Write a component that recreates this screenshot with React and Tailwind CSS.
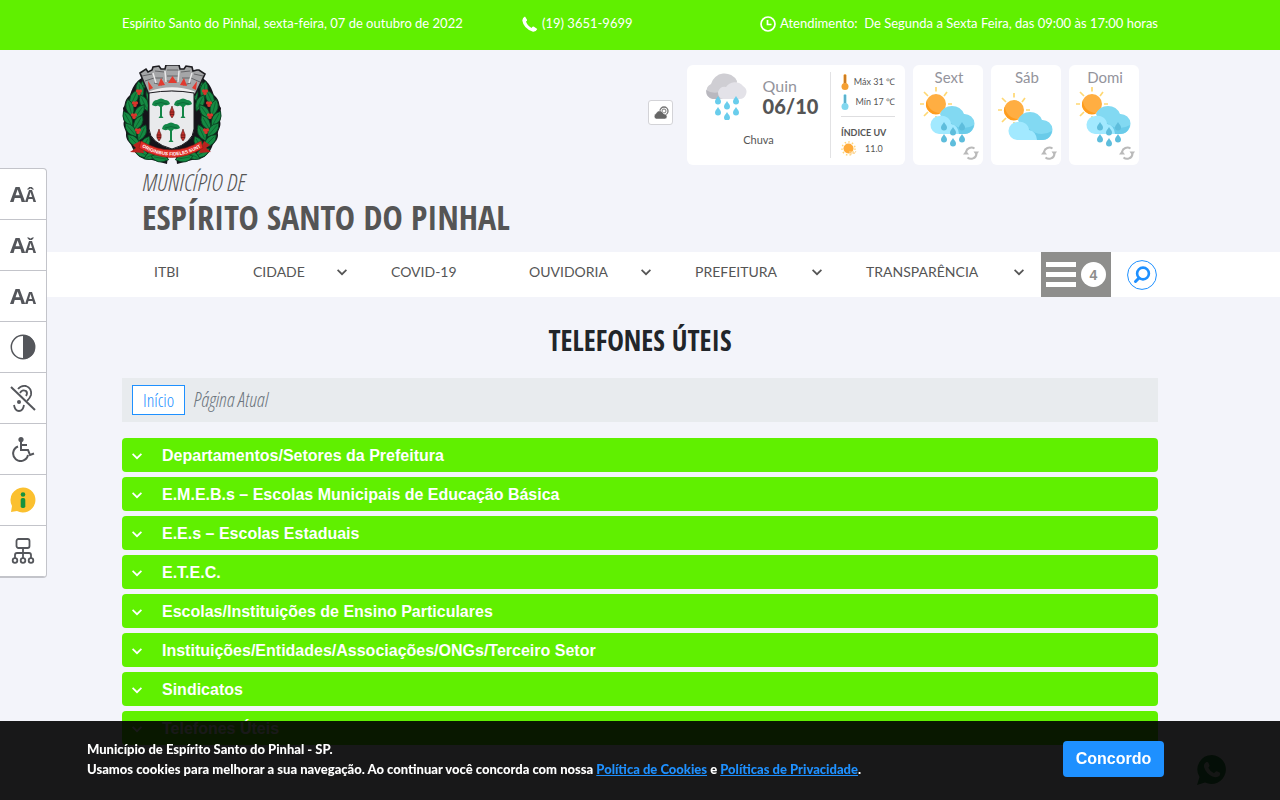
import React from "react";

const menu = [
  { label: "ITBI" },
  { label: "CIDADE", sub: true },
  { label: "COVID-19" },
  { label: "OUVIDORIA", sub: true },
  { label: "PREFEITURA", sub: true },
  { label: "TRANSPARÊNCIA", sub: true },
];

const sections = [
  "Departamentos/Setores da Prefeitura",
  "E.M.E.B.s – Escolas Municipais de Educação Básica",
  "E.E.s – Escolas Estaduais",
  "E.T.E.C.",
  "Escolas/Instituições de Ensino Particulares",
  "Instituições/Entidades/Associações/ONGs/Terceiro Setor",
  "Sindicatos",
  "Telefones Úteis",
];

const leaves = [
  [24, 17, 35], [18, 25, -10], [28, 27, 15], [12, 33, 25], [22, 38, -25], [8, 43, -15],
  [17, 47, 35], [6, 54, -30], [16, 58, 30], [9, 65, -40], [20, 68, 25], [12, 76, -45],
  [23, 79, 30], [20, 88, -60], [30, 90, 65], [38, 93, -80],
];
const berries = [[17, 27], [13, 39], [12, 51], [16, 66]];

function Branch() {
  return (
    <g>
      <path d="M26 10 C12 15 10 25 8 30 C1 36 4 40 1 43 C2 50 0 52 2 56 C0 62 5 65 4 70 C4 76 9 78 10 82 C14 91 20 95 30 95 L45 99 L50 60 L30 15Z" fill="#15141a" />
      {leaves.map(([x, y, r]) => (
        <g key={x + "-" + y} transform={`translate(${x} ${y}) rotate(${r})`}>
          <path d="M0 -9 Q8 -1 0 9 Q-8 -1 0 -9Z" fill="#158a43" stroke="#0b3b20" strokeWidth="0.8" />
          <path d="M0 -6V6" stroke="#0c5c2b" strokeWidth="0.7" />
        </g>
      ))}
      {berries.map(([x, y]) => (
        <g key={y} fill="#d9362c">
          <circle cx={x - 1.4} cy={y - 1} r="1.700" />
          <circle cx={x + 1.4} cy={y - 1} r="1.700" />
          <circle cx={x} cy={y + 1.4} r="1.700" />
        </g>
      ))}
    </g>
  );
}

function Tree({ x, y }) {
  return (
    <g transform={`translate(${x} ${y})`}>
      <path d="M-9 2 Q-8 -3 -4 -3 Q0 -6 4 -3 Q8 -3 9 1 Q6 3 3 2 L1 4 V13 L2.500 15 H-2.500 L-1 13 V4 L-3 2.500 Q-6 4 -9 2Z" fill="#138647" />
      <path d="M-6 1 Q0 -2 6 1" stroke="#0a5d30" fill="none" strokeWidth="0.7" />
    </g>
  );
}

function Cone({ x, y }) {
  return (
    <g transform={`translate(${x} ${y})`}>
      <path d="M0 -6 L1 -3 Q2.600 -1 2 3 L0 6 L-2 3 Q-2.600 -1 -1 -3Z" fill="#c5302c" stroke="#541412" strokeWidth="0.6" />
      <path d="M-2 0H2M-2 2.400H2" stroke="#541412" strokeWidth="0.7" />
    </g>
  );
}

function Crest() {
  return (
    <svg viewBox="0 0 100 100" className="size-[100px]" role="img" aria-label="Brasão">
      <Branch />
      <g transform="translate(100 0) scale(-1 1)"><Branch /></g>
      <path d="M26 28 L72 28 L74 70 L50 92 L26 70Z" fill="#17161b" />
      <path d="M18 8 L24 4 L26 7 L30 5 L31 2 L37 1 L39 4 L43 4 L44 0 L57 0 L58 4 L62 4 L64 1 L70 2 L71 6 L75 5 L77 5 L83 9 L73 30 Q50 22 27 30Z" fill="#a5a6a8" stroke="#1d1c20" strokeWidth="1.600" />
      <path d="M20 11L30 9M33 6L42 7M45 5H56M59 7L68 6M72 9L81 11M23 16L32 13L41 13M45 11H56M60 13L69 13L78 17M32 18L40 20M44 16H57M61 20L69 18" stroke="#5d5e61" strokeWidth="0.9" fill="none" />
      <path d="M31 8L34 18M43 6L44 17M57 6L56 17M70 8L67 18" stroke="#e7e7e8" strokeWidth="1.500" />
      <path d="M36 21 L39 13 L43 20Z M46 18 L50.500 11 L55 18Z M58 20 L62 13 L65 21Z M26 16 L31 23 L27 25Z M75 16 L70 23 L74 25Z" fill="#e23a2f" />
      <path d="M28 28 Q50 20 72 28" fill="none" stroke="#eeeeef" strokeWidth="3.500" />
      <path d="M27 28 Q50 24 72 28 V64 Q71 78 50 84 Q28 78 27 64Z" fill="#e9eaec" stroke="#1b1a1f" strokeWidth="1" />
      <Tree x={39} y={38} />
      <Tree x={61} y={38} />
      <Tree x={49} y={62} />
      <Cone x={50} y={47} />
      <Cone x={37} y={70} />
      <Cone x={61} y={70} />
      <path d="M18 76 L11 80 L14 83 L8 87 L22 88Z M82 76 L88 80 L84 83 L89 87 L77 88Z" fill="#b8231e" />
      <path d="M19 76 Q50 94 79 76 L81 83 Q50 102 17 83Z" fill="#e23028" stroke="#8b1613" strokeWidth="0.6" />
      <path id="motto" d="M20 82 Q50 99 79 82" fill="none" />
      <text fontSize="4.600" fontWeight="700" fill="#fff" fontFamily="Liberation Sans, sans-serif">
        <textPath href="#motto" startOffset="50%" textAnchor="middle">ORIGINIBUS FIDELES SUNT</textPath>
      </text>
    </svg>
  );
}

function Chevron({ className }) {
  return (
    <svg viewBox="0 0 10 10" className={className} fill="none" stroke="currentColor" strokeWidth="1.700" aria-hidden="true">
      <path d="M0.600 2.800 L5 7.200 L9.400 2.800" />
    </svg>
  );
}

const drop = "M0 -4 C1 -2 3 -0.500 3 1.500 A3 3 0 0 1 -3 1.500 C-3 -0.500 -1 -2 0 -4Z";

function RainCloud() {
  return (
    <svg viewBox="0 0 42 48" className="h-12 w-[42px]" aria-hidden="true">
      <path d="M8 27 A8 8 0 0 1 6 12 A14 14 0 0 1 32 9 L30 27Z" fill="#cfced3" />
      <path d="M1 18 Q10 24 20 17 L14 27 H8 Q1 26 1 18Z" fill="#b9b8bf" />
      <path d="M18 27 A6 7 0 0 1 13 20 Q15 14 21 15 A10 9 0 0 1 38 14 A7 7 0 0 1 34 27Z" fill="#e3e2e8" />
      {[[13, 28], [31, 28], [22, 33], [13, 39], [31, 39], [22, 44]].map(([x, y]) => (
        <path key={x + "-" + y} d={drop} transform={`translate(${x} ${y})`} fill="#69cdec" />
      ))}
    </svg>
  );
}

function SunCloud({ rain }) {
  return (
    <svg viewBox="0 0 56 60" className="h-[60px] w-14" aria-hidden="true">
      <g transform={rain ? "translate(0 0)" : "translate(0 6)"}>
        <path d="M17 0V4.500M28 5L25 9M5 5L9 9M1 17H5M29 17H33M5 29L9 25M17 29V31" stroke="#ffd873" strokeWidth="1.700" />
        <circle cx="17" cy="17" r="10" fill="#ffae42" />
        <path d="M8 13A10 10 0 0 0 22 26A13 13 0 0 1 8 13Z" fill="#ff9c1c" />
        <path d="M21 27 A13 13 0 0 1 45 27 A10 10 0 0 1 46 47 H29Z" fill="#82d9f2" />
        <path d="M28 46 Q36 44 32 36 Q43 45 55 38 Q53 47 45 47H29Z" fill="#6acbe9" />
        <path d="M20 47 A9 9 0 1 1 21 29 A9 9 0 0 1 32 37 Q39 38 40 47Z" fill="#a2e9ff" />
      </g>
      {rain && [[25, 40], [34, 45], [43, 40], [25, 52], [34, 56], [43, 52]].map(([x, y], i) => (
        <path key={i} d={drop} transform={`translate(${x} ${y - 1})`} fill="#5ebddc" />
      ))}
    </svg>
  );
}

function Refresh() {
  return (
    <svg viewBox="0 0 16 16" className="size-4" fill="none" stroke="#bababa" strokeWidth="2" aria-hidden="true">
      <path d="M3 7 A5.500 5.500 0 0 1 11.500 3.500M13.500 9A5.500 5.500 0 0 1 4.500 12.500" />
      <path d="M0 9.500 H6 L3 5.500Z M10.500 6.500H16L13.300 10.500Z" fill="#bababa" stroke="none" />
    </svg>
  );
}

function Thermo({ color, tip }) {
  return (
    <svg viewBox="0 0 8 16" className="h-4 w-2" aria-hidden="true">
      <rect x="2.500" y="0" width="3" height="12" rx="1.500" fill={color} />
      <path d="M4 1V9" stroke={tip} strokeWidth="1.300" />
      <circle cx="4" cy="12.500" r="3.500" fill={color} />
    </svg>
  );
}

function ContrastIcon() {
  return (
    <svg viewBox="0 0 26 26" className="size-[26px]" aria-hidden="true">
      <circle cx="13" cy="13" r="11.700" fill="none" stroke="#54565b" strokeWidth="1.500" />
      <path d="M13 1A12 12 0 0 1 13 25Z" fill="#54565b" />
    </svg>
  );
}

function EarIcon() {
  return (
    <svg viewBox="0 0 26 28" className="h-7 w-[26px]" fill="none" stroke="#54565b" strokeWidth="1.800" aria-hidden="true">
      <path d="M8 5 Q11 1 16 2 Q22 4 21 11 Q20 14 17 17M10 9 Q12 5 16 7 Q18 9 16 12M4 21 Q5 27 9 27 Q13 27 14 21" />
      <circle cx="9" cy="18" r="2" fill="#54565b" stroke="none" />
      <path d="M1 3 L25 26" strokeWidth="2" />
    </svg>
  );
}

function WheelchairIcon() {
  return (
    <svg viewBox="0 0 26 26" className="size-[26px]" fill="none" stroke="#54565b" strokeWidth="2" aria-hidden="true">
      <circle cx="11" cy="3.500" r="2.600" fill="#54565b" stroke="none" />
      <path d="M11 5V14H18L20 19L24 17.500M11 9H17M8 10.500A7.500 7.500 0 1 0 18 19" />
    </svg>
  );
}

function InfoIcon() {
  return (
    <svg viewBox="0 0 26 26" className="size-[26px]" aria-hidden="true">
      <path d="M13 0.500A12.500 12.500 0 1 1 7 24 L1 25 L2 19A12.500 12.500 0 0 1 13 0.500Z" fill="#fbc02f" />
      <circle cx="13" cy="7.500" r="2.300" fill="#15923f" />
      <rect x="10.700" y="11" width="4.600" height="10" rx="1.800" fill="#15923f" />
    </svg>
  );
}

function SitemapIcon() {
  return (
    <svg viewBox="0 0 26 26" className="size-[26px]" fill="none" stroke="#54565b" strokeWidth="1.800" aria-hidden="true">
      <rect x="6.500" y="1" width="13" height="9" rx="2" />
      <path d="M13 10V20M5 20V17Q5 15 7 15H19Q21 15 21 17V20" />
      <circle cx="5" cy="22.500" r="2.300" />
      <circle cx="13" cy="22.500" r="2.300" />
      <circle cx="21" cy="22.500" r="2.300" />
    </svg>
  );
}

function SizeLabel({ small }) {
  return (
    <span className="flex items-baseline font-['Open_Sans',sans-serif] font-bold text-[#54565b]">
      <span className="text-[22px] leading-6">A</span>
      <span className="text-base leading-6">{small}</span>
    </span>
  );
}

const tools = [
  ["Aumentar fonte", <SizeLabel small="Â" />],
  ["Diminuir fonte", <SizeLabel small="Ǎ" />],
  ["Fonte padrão", <SizeLabel small="A" />],
  ["Contraste", <ContrastIcon />],
  ["Libras", <EarIcon />],
  ["Acessibilidade", <WheelchairIcon />],
  ["Informações", <InfoIcon />],
  ["Mapa do site", <SitemapIcon />],
];

function Toolbar() {
  return (
    <aside className="fixed left-0 top-[168px] z-20 flex w-[47px] flex-col overflow-hidden rounded-r border-y border-r border-[#c3c4ca] bg-white">
      {tools.map(([name, icon]) => (
        <button key={name} type="button" aria-label={name} className="flex h-[51px] items-center justify-center border-b border-[#c3c4ca]">
          {icon}
        </button>
      ))}
    </aside>
  );
}

function Weather() {
  return (
    <div className="mr-[19px] flex items-start gap-3.5 font-['Lato',sans-serif] text-[#555]">
      <button type="button" aria-label="Previsão do tempo" className="mt-[35px] flex size-[25px] items-center justify-center rounded-[3px] border border-[#d3d3d7] bg-white">
        <svg viewBox="0 0 16 14" className="h-3.5 w-4" aria-hidden="true">
          <circle cx="11" cy="5" r="4" fill="none" stroke="#777" strokeWidth="1.300" />
          <circle cx="11" cy="5" r="2" fill="none" stroke="#777" />
          <path d="M3 13A3 3 0 0 1 3 7.500A4 4 0 0 1 9 5.500Q10 7 11 8A2.500 2.500 0 0 1 12 13Z" fill="#666" stroke="#fff" strokeWidth="0.500" />
        </svg>
      </button>
      <div className="flex gap-2">
        <section className="flex h-[100px] w-[218px] rounded-md bg-white py-[7px]">
          <div className="flex w-36 flex-col items-center border-r border-[#e2e2e4]">
            <div className="flex gap-4 pl-1.5">
              <RainCloud />
              <div className="pt-1">
                <p className="text-base leading-5 text-[#94949c]">Quin</p>
                <p className="text-xl font-black leading-5">06/10</p>
              </div>
            </div>
            <p className="mt-3 text-[11px] leading-4">Chuva</p>
          </div>
          <div className="flex flex-1 flex-col px-2.5 text-[9px]">
            <div className="flex h-5 items-center justify-between whitespace-nowrap"><Thermo color="#f5a033" tip="#b5691a" /><span>Máx 31 ℃</span></div>
            <div className="flex h-5 items-center justify-between whitespace-nowrap"><Thermo color="#82d7ef" tip="#4a9cb8" /><span>Mín 17 ℃</span></div>
            <hr className="mt-1 border-[#dedee0]" />
            <p className="mt-2 whitespace-nowrap font-bold leading-4">ÍNDICE UV</p>
            <div className="flex items-center gap-2">
              <svg viewBox="0 0 16 16" className="size-4" aria-hidden="true">
                <circle cx="7.500" cy="7.500" r="6.500" fill="none" stroke="#ffd478" strokeDasharray="1.500 2.200" strokeWidth="1.500" />
                <circle cx="7.500" cy="7.500" r="5" fill="#ffac3c" />
                <path d="M9 10V13H11V10M12 10L13 13L15 10" fill="none" stroke="#fcd89b" />
              </svg>
              <span>11.0</span>
            </div>
          </div>
        </section>
        {[["Sext", true], ["Sáb", false], ["Domi", true]].map(([day, rain]) => (
          <section key={day} className="flex h-[100px] w-[70px] flex-col rounded-md bg-white pl-1.5 pr-1 pt-0.5">
            <h3 className="text-center text-[15px] leading-5 text-[#94949c]">{day}</h3>
            <SunCloud rain={rain} />
            <span className="-mt-0.5 self-end"><Refresh /></span>
          </section>
        ))}
      </div>
    </div>
  );
}

export default function App() {
  return (
    <div className="min-h-screen bg-[#f3f4fa] font-['Liberation_Sans',sans-serif]">
      <div className="h-[50px] bg-[#60f000] font-['Lato',sans-serif] text-[13px] text-white">
        <div className="mx-auto flex h-12 max-w-[1036px] items-center justify-between">
          <span className="w-[400px]">Espírito Santo do Pinhal, sexta-feira, 07 de outubro de 2022</span>
          <span className="flex flex-1 items-center gap-1">
            <svg viewBox="0 0 16 16" className="size-4" fill="currentColor" aria-hidden="true">
              <path d="M3 0.500 L5 3.800 Q5.500 4.800 4 5.600 Q5 9.500 9.500 12 Q11 10 12 10.800 L15.300 13 Q14 16 11 15.800 Q1.500 12.500 0.300 4.500 Q0.500 1.500 3 0.500Z" />
            </svg>
            (19) 3651-9699
          </span>
          <span className="flex items-center gap-1 whitespace-pre">
            <svg viewBox="0 0 16 16" className="size-4" fill="none" stroke="currentColor" strokeWidth="1.700" aria-hidden="true">
              <circle cx="8" cy="8" r="7" />
              <path d="M7.500 4V8.500H11.500" />
            </svg>
            {"Atendimento:  De Segunda a Sexta Feira, das 09:00 às 17:00 horas"}
          </span>
        </div>
      </div>

      <header className="mx-auto flex h-[202px] max-w-[1036px] items-start justify-between pt-[15px]">
        <a href="#" className="block text-[#555]">
          <Crest />
          <span className="ml-5 block font-['Open_Sans_Condensed_Light','Open_Sans_Condensed',sans-serif] text-2xl font-light italic leading-[34px]">MUNICÍPIO DE</span>
          <span className="ml-5 block font-['Open_Sans_Condensed',sans-serif] text-[34px] font-bold leading-9">ESPÍRITO SANTO DO PINHAL</span>
        </a>
        <Weather />
      </header>

      <div className="bg-white">
        <div className="mx-auto flex h-[45px] max-w-[1036px] items-stretch">
          <nav className="grid flex-1 grid-cols-[99fr_138fr_138fr_166fr_171fr_202fr] font-['Lato',sans-serif] text-sm text-[#555]">
            {menu.map((m) => (
              <a key={m.label} href="#" className="flex h-10 items-center justify-between pl-8 pr-3">
                {m.label}
                {m.sub && <Chevron className="size-2.5" />}
              </a>
            ))}
          </nav>
          <button type="button" aria-label="Mais itens do menu" className="ml-[5px] flex w-[70px] items-center justify-between bg-[#8e8e8c] px-[5px]">
            <span className="flex w-[30px] flex-col gap-[5px]">
              <span className="h-[5px] bg-white" />
              <span className="h-[5px] bg-white" />
              <span className="h-[5px] bg-white" />
            </span>
            <span className="flex size-[25px] items-center justify-center rounded-full bg-white text-sm font-bold text-[#8e8e8c]">4</span>
          </button>
          <button type="button" aria-label="Pesquisar" className="ml-4 flex w-[31px] items-center">
            <svg viewBox="0 0 30 30" className="size-[30px]" fill="none" stroke="#1e90ff" aria-hidden="true">
              <circle cx="15" cy="15" r="14.400" />
              <circle cx="16" cy="13.500" r="5.900" strokeWidth="2.600" />
              <path d="M12 18L8.500 21.500" strokeWidth="3" strokeLinecap="round" />
            </svg>
          </button>
        </div>
      </div>

      <main className="mx-auto max-w-[1036px] pb-24 pt-6">
        <h1 className="text-center font-['Open_Sans_Condensed',sans-serif] text-[28px] font-bold leading-[38px] text-[#212529]">TELEFONES ÚTEIS</h1>
        <div className="mt-[19px] flex h-11 items-center gap-2 bg-[#e8ebee] px-2.5 font-['Open_Sans_Condensed_Light','Open_Sans_Condensed',sans-serif] font-light">
          <a href="#" className="flex h-[30px] items-center border border-[#1e90ff] bg-white px-2.5 text-lg text-[#1e90ff]">Início</a>
          <span className="text-xl italic leading-10 text-[#6c757d]">Página Atual</span>
        </div>
        <div className="mt-4 flex flex-col gap-[5px]">
          {sections.map((s) => (
            <button key={s} type="button" aria-expanded="false" className="flex h-[34px] items-center gap-5 rounded-sm bg-[#60f000] px-2.5 pt-0.5 text-left text-base font-bold text-white">
              <Chevron className="size-2.5" />
              {s}
            </button>
          ))}
        </div>
      </main>

      <Toolbar />

      <a href="#" aria-label="WhatsApp" className="fixed bottom-3.5 right-[52px] z-20">
        <svg viewBox="0 0 32 32" className="size-8" aria-hidden="true">
          <path d="M16 1A14.500 14.500 0 1 1 9 28.500L1 31L3.500 23A14.500 14.500 0 0 1 16 1Z" fill="#2f8a45" />
          <path d="M10.500 8Q12 7.500 12.500 9L13.500 11.500Q13.500 12.500 12.300 13.800Q14 17.500 18 19.300L19.800 17.500Q20.500 17 21.500 17.500L24 18.800Q24.500 19.500 23.700 21.500Q21 24.500 16.500 22.500Q10 19.500 8 13Q7.500 9.500 10.500 8Z" fill="#d5dcd7" />
        </svg>
      </a>

      <div className="fixed inset-x-0 bottom-0 z-30 flex h-[79px] items-start justify-between bg-black/90 pl-[87px] pr-[116px] pt-5 text-white">
        <p className="-mt-0.5 font-['Lato',sans-serif] text-[13px] font-black leading-5">
          Município de Espírito Santo do Pinhal - SP.<br />
          Usamos cookies para melhorar a sua navegação. Ao continuar você concorda com nossa{" "}
          <a href="#" className="text-[#1e90ff] underline">Política de Cookies</a> e{" "}
          <a href="#" className="text-[#1e90ff] underline">Políticas de Privacidade</a>.
        </p>
        <button type="button" className="h-9 w-[101px] rounded bg-[#1e90ff] text-base font-bold">Concordo</button>
      </div>
    </div>
  );
}
